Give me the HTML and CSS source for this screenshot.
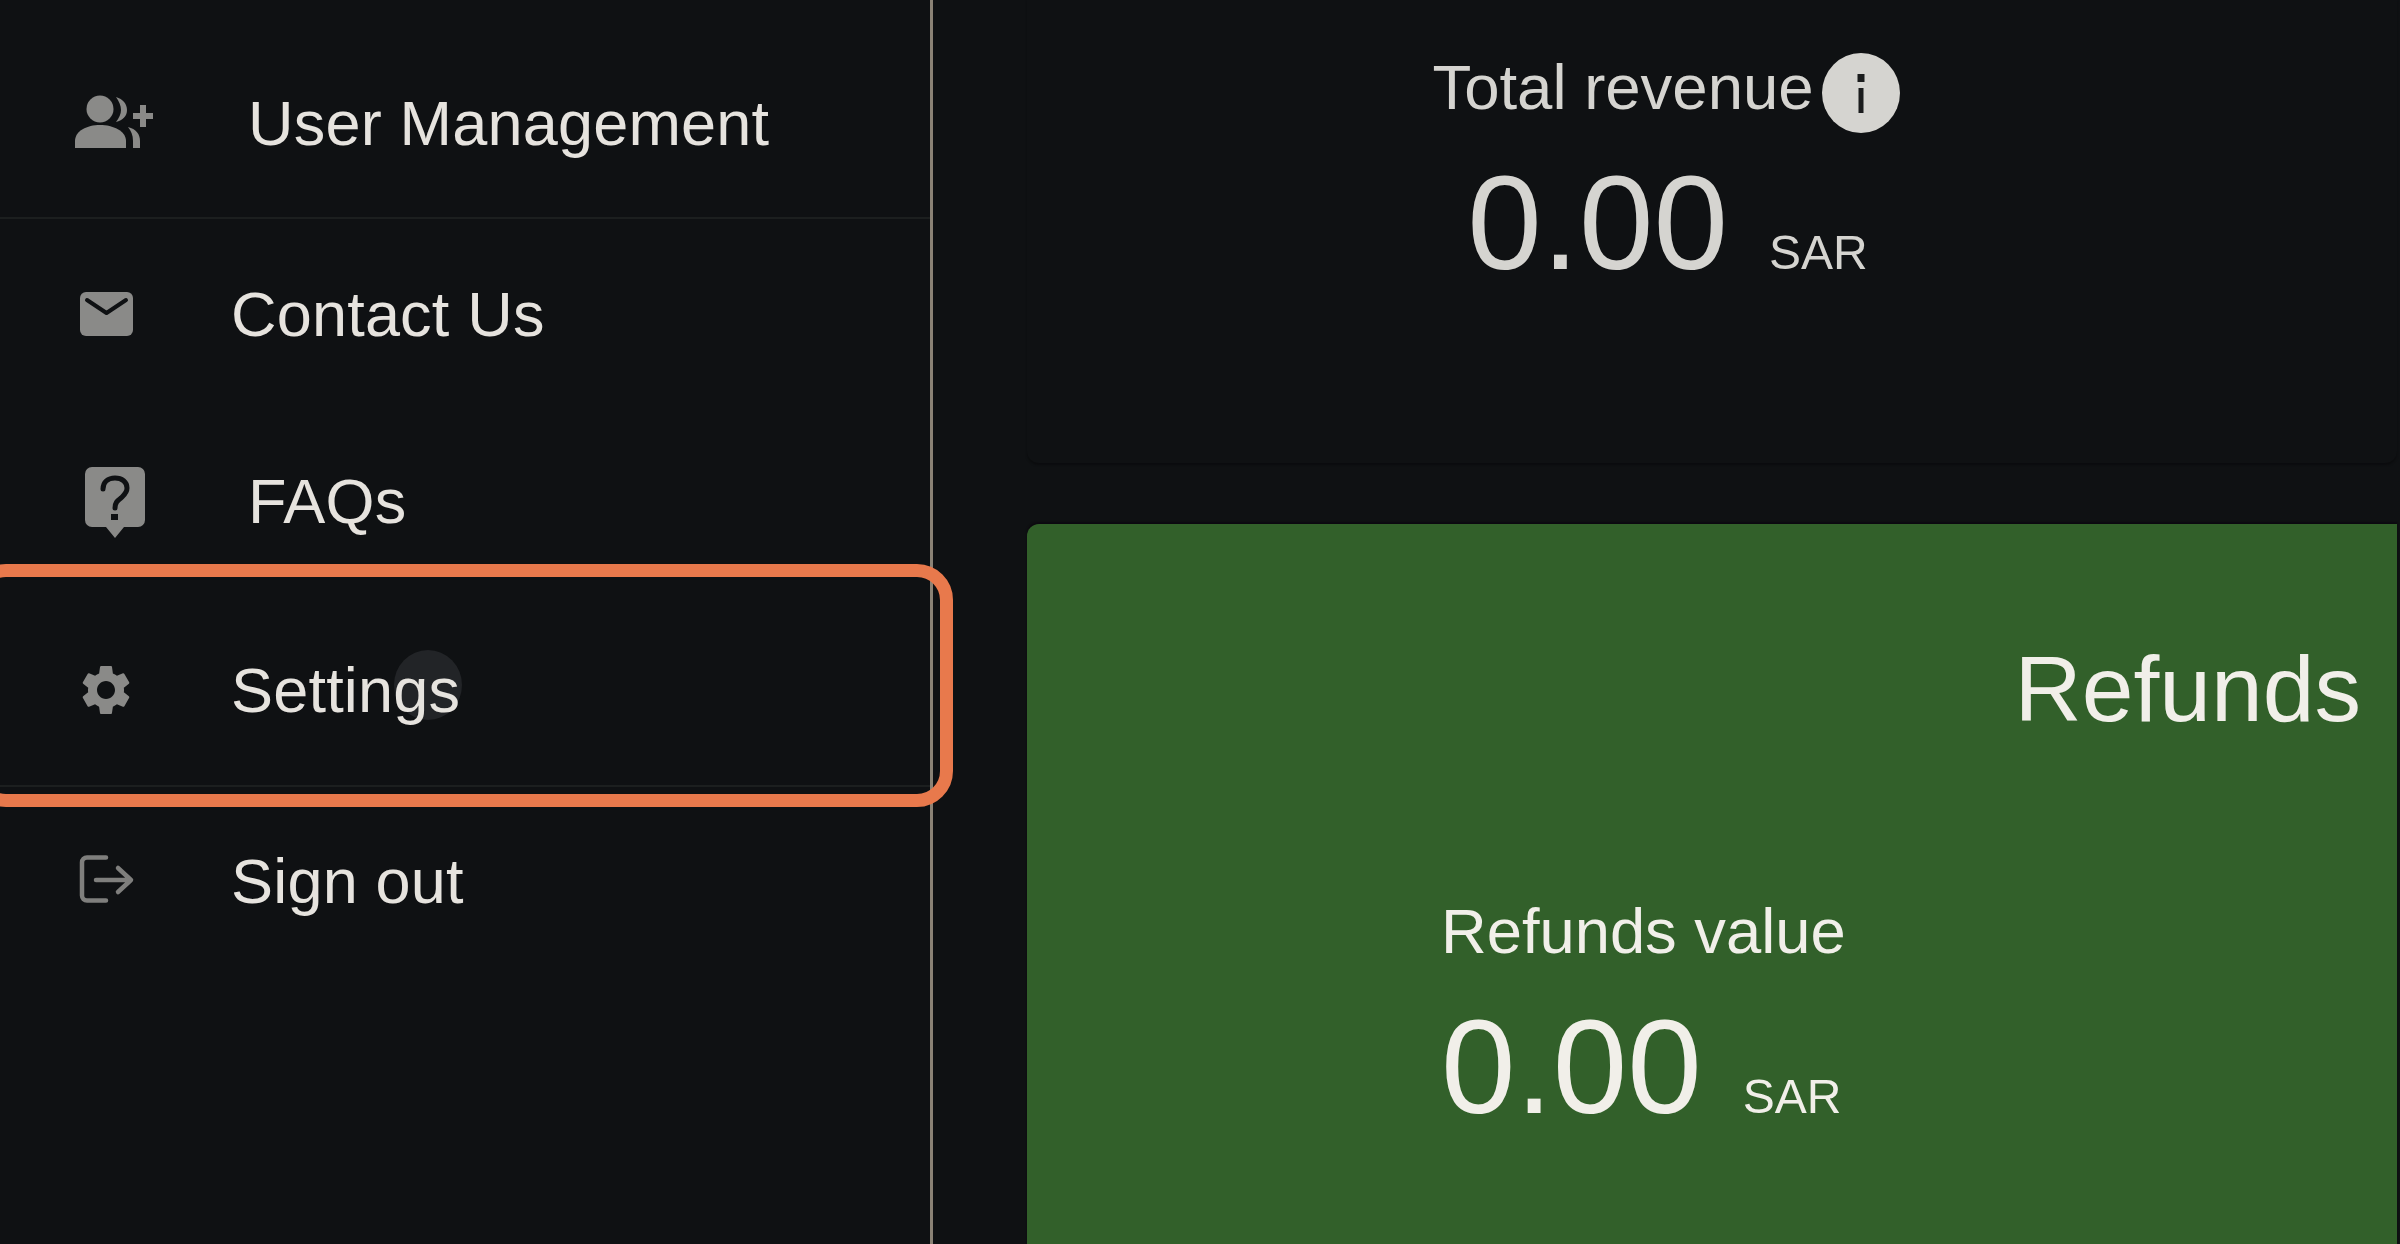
FILE: index.html
```html
<!DOCTYPE html>
<html lang="en">
<head>
<meta charset="utf-8">
<title>Dashboard</title>
<link rel="stylesheet" href="styles.css">
</head>
<body>
<div class="app">
  <aside class="sidebar">
    <nav class="nav">
      <a class="row row-wide row-ruled">
        <span class="slot">
          <svg class="icon" viewBox="74 83 80 80">
            <circle cx="100" cy="109" r="13.5"/>
            <path d="M116 97c7 2 11 7 11 13s-4 10-11 12c3-4 5-8 5-12s-2-9-5-13z"/>
            <path d="M75 148v-7c0-10 12-16 25-16s26 6 26 16v7z"/>
            <path d="M128 127c8 2 12 7 12 14v7h-7v-7c0-6-2-10-5-14z"/>
            <path d="M140 105h6v8h7v6h-7v8h-6v-8h-7v-6h7z"/>
          </svg>
        </span>
        <span class="label">User Management</span>
      </a>
      <a class="row row-contact">
        <span class="slot">
          <svg class="icon" viewBox="74 274 80 80">
            <rect x="80" y="292" width="53" height="44" rx="6"/>
            <path class="cut" d="M87 300l19.500 13 19.500-13"/>
          </svg>
        </span>
        <span class="label">Contact Us</span>
      </a>
      <a class="row row-wide">
        <span class="slot">
          <svg class="icon" viewBox="74 461 80 80">
            <path d="M92 467h46a7 7 0 0 1 7 7v46a7 7 0 0 1-7 7h-14l-9 11-9-11H92a7 7 0 0 1-7-7v-46a7 7 0 0 1 7-7z"/>
            <path class="cut cut-bold" d="M103 489c0-7 5-11 12-11s12 4 12 10c0 5-3 7-6 10-4 3-6 5-6 10"/>
            <rect class="cut-fill" x="111" y="514" width="7" height="6"/>
          </svg>
        </span>
        <span class="label">FAQs</span>
      </a>
      <a class="row row-settings row-ruled">
        <span class="slot">
          <svg class="icon" viewBox="74 648 80 80">
            <g transform="translate(76 658) scale(2.5)">
              <path d="M19.140 12.940c.04-.3.06-.61.06-.94 0-.32-.02-.64-.07-.94l2.030-1.580c.18-.14.23-.41.12-.61l-1.920-3.320c-.12-.22-.37-.29-.59-.22l-2.390.96c-.5-.38-1.030-.7-1.620-.94l-.36-2.540c-.04-.24-.24-.41-.48-.41h-3.840c-.24 0-.43.17-.47.41l-.36 2.540c-.59.24-1.130.57-1.620.94l-2.390-.96c-.22-.08-.47 0-.59.22L2.740 8.870c-.12.21-.08.47.12.61l2.030 1.580c-.05.3-.09.63-.09.94s.02.64.07.94l-2.030 1.580c-.18.14-.23.41-.12.61l1.920 3.320c.12.22.37.29.59.22l2.390-.96c.5.38 1.030.7 1.620.94l.36 2.540c.05.24.24.41.48.41h3.840c.24 0 .44-.17.47-.41l.36-2.540c.59-.24 1.130-.56 1.620-.94l2.390.96c.22.08.47 0 .59-.22l1.920-3.320c.12-.22.07-.47-.12-.61l-2.010-1.580zM12 15.600c-1.980 0-3.600-1.620-3.600-3.600s1.620-3.600 3.600-3.600 3.600 1.620 3.600 3.600-1.620 3.600-3.600 3.600z"/>
            </g>
          </svg>
        </span>
        <span class="label"><span class="ripple"></span><span class="label-text">Settings</span></span>
      </a>
      <a class="row">
        <span class="slot">
          <svg class="icon" viewBox="74 841 80 80">
            <path class="line" d="M106 857.500H87a5 5 0 0 0-5 5v33a5 5 0 0 0 5 5h19"/>
            <path class="line" d="M96 880h34M118 868l13 12-13 12"/>
          </svg>
        </span>
        <span class="label">Sign out</span>
      </a>
    </nav>
    <div class="highlight"></div>
  </aside>
  <main class="main">
    <section class="revenue">
      <div class="revenue-stat">
        <div class="stat-head">
          <span class="stat-title">Total revenue</span>
          <svg class="info" viewBox="0 0 78 80">
            <ellipse cx="39" cy="40" rx="39" ry="40"/>
            <rect class="info-mark" x="35.500" y="21" width="7" height="8"/>
            <rect class="info-mark" x="36.500" y="35" width="5" height="25"/>
          </svg>
        </div>
        <div class="value-row">
          <span class="value">0.00</span>
          <span class="unit">SAR</span>
        </div>
      </div>
    </section>
    <section class="refunds">
      <h2 class="refunds-title">Refunds</h2>
      <div class="refunds-stat">
        <div class="stat-title">Refunds value</div>
        <div class="value-row value-row-tight">
          <span class="value">0.00</span>
          <span class="unit">SAR</span>
        </div>
        <div class="stat-title stat-next">Refunds count</div>
      </div>
    </section>
  </main>
</div>
</body>
</html>
```
FILE: styles.css
```css
* { box-sizing: border-box; }

html, body {
  margin: 0;
  height: 100%;
  background: #0f1113;
  overflow: hidden;
}

.app {
  display: flex;
  width: 2400px;
  height: 1244px;
  overflow: hidden;
  font-family: "Liberation Sans", Arial, sans-serif;
  filter: blur(0.6px);
}

.sidebar {
  position: relative;
  flex: 0 0 933px;
  border-right: 3px solid #8a8275;
  z-index: 1;
}

.nav {
  display: flex;
  flex-direction: column;
  padding-top: 29px;
}

.row {
  display: flex;
  align-items: center;
  height: 188px;
  padding-left: 74px;
  color: #e6e3de;
  font-size: 63px;
  letter-spacing: 0.2px;
  line-height: 68px;
}

.row-ruled {
  height: 190px;
  border-bottom: 2px solid #1c1f1f;
}

.row-contact {
  padding-top: 2px;
}

.row-settings {
  height: 192px;
}

.slot {
  flex: 0 0 157px;
  display: flex;
}

.row-wide .slot {
  flex-basis: 174px;
}

.icon {
  width: 80px;
  height: 80px;
  fill: #8a8a88;
}

.cut {
  fill: none;
  stroke: #0f1113;
  stroke-width: 4;
  stroke-linecap: round;
  stroke-linejoin: round;
}

.cut-bold {
  stroke-width: 5;
}

.cut-fill {
  fill: #0f1113;
}

.line {
  fill: none;
  stroke: #7f7f7d;
  stroke-width: 4.500;
  stroke-linecap: round;
  stroke-linejoin: round;
}

.label {
  position: relative;
  white-space: nowrap;
}

.label-text {
  position: relative;
}

.ripple {
  position: absolute;
  left: 163px;
  top: -6px;
  width: 68px;
  height: 70px;
  border-radius: 50%;
  background: #222427;
}

.highlight {
  position: absolute;
  left: -30px;
  top: 564px;
  width: 983px;
  height: 243px;
  border: 13px solid #e8794c;
  border-radius: 36px;
  pointer-events: none;
}

.main {
  flex: 1;
  min-width: 0;
  padding-left: 94px;
  padding-right: 3px;
  color: #d5d4d0;
}

.revenue {
  height: 463px;
  padding-top: 53px;
  border-radius: 0 0 12px 12px;
  box-shadow: 0 2px 2px #0b0c0e;
}

.revenue-stat {
  display: flex;
  flex-direction: column;
  align-items: center;
  width: 1278px;
}

.stat-head {
  display: flex;
  align-items: flex-start;
  gap: 8px;
}

.stat-title {
  font-size: 63.500px;
  line-height: 68px;
  white-space: nowrap;
}

.info {
  width: 78px;
  height: 80px;
  fill: #d5d4d0;
}

.info-mark {
  fill: #1b1c1d;
}

.value-row {
  display: flex;
  align-items: baseline;
  gap: 41px;
  margin-top: 24px;
}

.revenue .value-row {
  padding-left: 3px;
}

.value-row-tight {
  margin-top: 36px;
}

.value {
  font-size: 134px;
  line-height: 131px;
}

.unit {
  font-size: 48px;
  line-height: 48px;
}

.refunds {
  height: 720px;
  margin-top: 61px;
  padding-top: 113px;
  overflow: hidden;
  border-radius: 12px 0 0 0;
  background: #32602a;
  box-shadow: 0 -2px 2px #0c090f;
  color: #f1efe9;
}

.refunds-title {
  margin: 0;
  padding-right: 36px;
  text-align: right;
  font-size: 93px;
  font-weight: 400;
  line-height: 104px;
}

.refunds-stat {
  margin-top: 156px;
  padding-left: 414px;
}

.refunds-stat .stat-title {
  font-size: 63.300px;
}

.stat-next {
  margin-top: 103px;
}
```
